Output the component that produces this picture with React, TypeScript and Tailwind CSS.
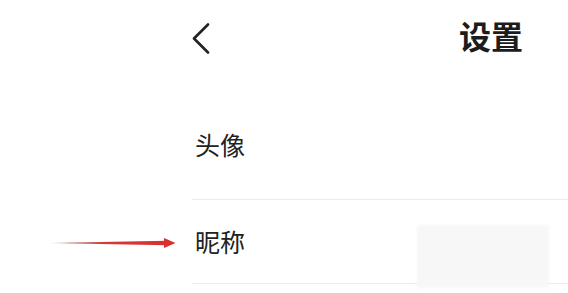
import React from "react";

export default function App() {
  return (
    <div
      className="relative w-[568px] h-[293px] overflow-hidden bg-white text-[#222222]"
      style={{ fontFamily: '"Noto Sans CJK SC", "Noto Sans", sans-serif' }}
    >
      <div className="flex h-[76px] items-center justify-between pl-[192px] pr-[45px]">
        <svg width="18" height="31" viewBox="0 0 18 31" fill="none">
          <path d="M16 1.5 L2 15.5 L16 29.5" stroke="#222222" strokeWidth="2.6" strokeLinecap="round" strokeLinejoin="round" />
        </svg>
        <span className="mb-[6px] text-[32px] font-bold leading-none text-[#1c1c1c]">设置</span>
      </div>
      <div className="ml-[192px]">
        <div className="flex h-[124px] items-center border-b border-[#ebebeb] pt-[14px] pl-[3px]">
          <span className="text-[25px] leading-none">头像</span>
        </div>
        <div className="flex h-[84px] items-center border-b border-[#ebebeb] pl-[3px]">
          <span className="text-[25px] leading-none">昵称</span>
        </div>
      </div>
      <div className="absolute left-[417px] top-[225px] h-[63px] w-[132px] rounded-[2px] bg-[#f7f7f7] blur-[1.5px]" />
      <svg className="absolute left-[44px] top-[236px]" width="132" height="14" viewBox="0 0 132 14">
        <defs>
          <linearGradient id="shaft" x1="0" y1="0" x2="1" y2="0">
            <stop offset="0" stopColor="#d9d9d9" stopOpacity="0.2" />
            <stop offset="0.2" stopColor="#a06060" stopOpacity="0.8" />
            <stop offset="0.5" stopColor="#d23a3a" />
            <stop offset="1" stopColor="#d92f2f" />
          </linearGradient>
        </defs>
        <polygon points="0,7 124,4.8 124,9.2" fill="url(#shaft)" />
        <polygon points="120,2 131.5,7 120,12" fill="#d92f2f" />
      </svg>
    </div>
  );
}
